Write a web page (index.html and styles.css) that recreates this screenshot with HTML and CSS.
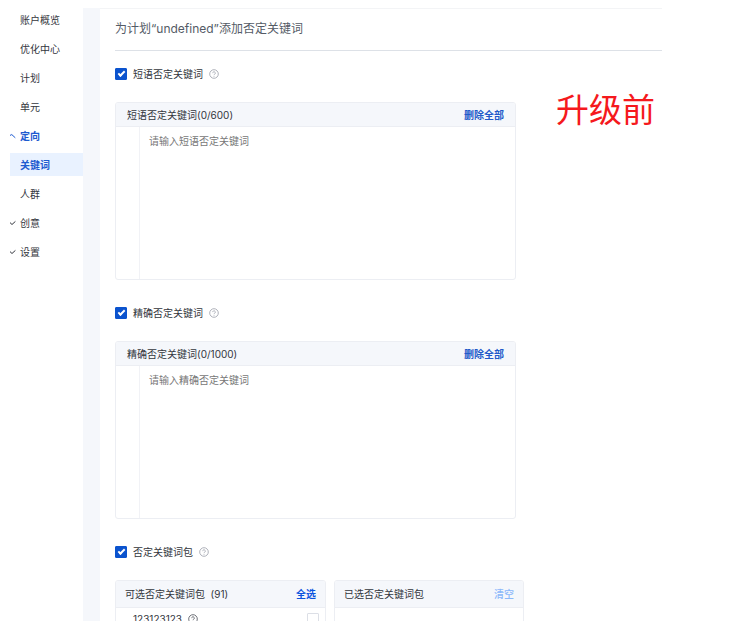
FILE: index.html
```html
<!DOCTYPE html>
<html lang="zh-CN">
<head>
    <meta charset="UTF-8">
    <meta name="viewport" content="width=device-width, initial-scale=1.0">
    <title>添加否定关键词</title>
    <link rel="stylesheet" href="styles.css">
</head>
<body>
    <svg class="symbols" width="0" height="0">
        <symbol id="help" viewBox="0 0 10 10">
            <circle cx="5" cy="5" r="4.3" />
            <path d="M3.7 4.1a1.3 1.3 0 1 1 2 1.1q-.7.4-.7 1M5 7v.7" />
        </symbol>
        <symbol id="up" viewBox="0 0 6 8">
            <path d="M0 3.4 1.8 2.6 5.3 5.8" />
        </symbol>
        <symbol id="down" viewBox="0 0 6 8">
            <path d="M0 3.6 2 5.5 5.4 2.4" />
        </symbol>
    </svg>
    <div class="page">
        <nav class="menu">
            <a class="item" href="#">账户概览</a>
            <a class="item" href="#">优化中心</a>
            <a class="item" href="#">计划</a>
            <a class="item" href="#">单元</a>
            <button class="item group open" type="button"><svg class="arrow"><use href="#up" /></svg>定向</button>
            <a class="item active" href="#">关键词</a>
            <a class="item" href="#">人群</a>
            <button class="item group" type="button"><svg class="arrow"><use href="#down" /></svg>创意</button>
            <button class="item group" type="button"><svg class="arrow"><use href="#down" /></svg>设置</button>
        </nav>
        <main class="main">
            <h1 class="title">为计划“undefined”添加否定关键词</h1>
            <div class="content">
                <form class="form" action="#">
                    <section class="section">
                        <div class="check-row">
                            <input class="check" type="checkbox" id="phrase" checked>
                            <label for="phrase">短语否定关键词</label>
                            <svg class="help"><use href="#help" /></svg>
                        </div>
                        <div class="panel words">
                            <div class="panel-head">
                                <label for="phraseWords">短语否定关键词(0/600)</label>
                                <button class="link" type="button">删除全部</button>
                            </div>
                            <div class="editor">
                                <textarea class="input" id="phraseWords" placeholder="请输入短语否定关键词"></textarea>
                            </div>
                        </div>
                    </section>
                    <section class="section">
                        <div class="check-row">
                            <input class="check" type="checkbox" id="exact" checked>
                            <label for="exact">精确否定关键词</label>
                            <svg class="help"><use href="#help" /></svg>
                        </div>
                        <div class="panel words">
                            <div class="panel-head">
                                <label for="exactWords">精确否定关键词(0/1000)</label>
                                <button class="link" type="button">删除全部</button>
                            </div>
                            <div class="editor">
                                <textarea class="input" id="exactWords" placeholder="请输入精确否定关键词"></textarea>
                            </div>
                        </div>
                    </section>
                    <section class="section">
                        <div class="check-row">
                            <input class="check" type="checkbox" id="pack" checked>
                            <label for="pack">否定关键词包</label>
                            <svg class="help"><use href="#help" /></svg>
                        </div>
                        <div class="packs">
                            <div class="panel">
                                <div class="panel-head pack-head">
                                    <span>可选否定关键词包&nbsp; (91)</span>
                                    <button class="link bright" type="button">全选</button>
                                </div>
                                <div class="pack-row">
                                    <label for="pack1">123123123</label>
                                    <svg class="help dark"><use href="#help" /></svg>
                                    <input class="check end" type="checkbox" id="pack1">
                                </div>
                            </div>
                            <div class="panel">
                                <div class="panel-head pack-head">
                                    <span>已选否定关键词包</span>
                                    <button class="link" type="button" disabled>清空</button>
                                </div>
                            </div>
                        </div>
                    </section>
                </form>
                <p class="note">升级前</p>
            </div>
        </main>
    </div>
</body>
</html>
```

FILE: styles.css
```css
* {
    box-sizing: border-box;
}

body {
    margin: 0;
    background: #fff;
    color: #33363d;
    font-family: Inter, "Noto Sans CJK SC", sans-serif;
    font-size: 10px;
    line-height: 16px;
}

button,
textarea {
    font: inherit;
    border: 0;
    padding: 0;
    background: none;
}

button {
    cursor: pointer;
}

svg {
    fill: none;
    stroke: currentColor;
    flex: none;
}

.symbols {
    position: absolute;
}

.page {
    display: flex;
    height: 100vh;
    padding: 8px 76px 0 10px;
    overflow: hidden;
}

/* 左侧菜单 */
.menu {
    flex: 0 0 90px;
    display: flex;
    flex-direction: column;
    gap: 6px;
    border-right: 17px solid #f5f7fb;
}

.item {
    display: flex;
    align-items: center;
    height: 23px;
    padding: 0 0 0 10px;
    color: #33363d;
    text-decoration: none;
}

.group {
    padding-left: 0;
    gap: 4px;
}

.arrow {
    width: 6px;
    height: 8px;
}

.open,
.active {
    color: #1d5ad0;
    font-weight: 700;
}

.active {
    background: #e9f2ff;
}

/* 右侧内容 */
.main {
    flex: 1;
    min-width: 0;
    padding-left: 15px;
    border-top: 1px solid #f3f4f6;
}

.title {
    margin: 0;
    padding: 10px 0 11px;
    border-bottom: 1px solid #dde1e7;
    color: #545b66;
    font-size: 12px;
    font-weight: 400;
    line-height: 20px;
}

.content {
    display: flex;
    align-items: flex-start;
    gap: 32px;
}

.form {
    flex: 0 1 409px;
    padding-top: 15px;
}

.section {
    margin-bottom: 25px;
}

.check-row {
    display: flex;
    align-items: center;
    gap: 6px;
    margin-bottom: 20px;
}

.check {
    display: grid;
    place-items: center;
    width: 12px;
    height: 12px;
    margin: 0;
    border: 1px solid #dcdfe6;
    border-radius: 1px;
    background: #fff;
    appearance: none;
}

.check:checked {
    border-color: #0b53ce;
    background: #0b53ce;
}

.check:checked::after {
    content: "";
    width: 5px;
    height: 2px;
    margin-bottom: 2px;
    border-left: 2px solid #fff;
    border-bottom: 2px solid #fff;
    transform: rotate(-45deg);
}

.help {
    width: 10px;
    height: 10px;
    color: #9a9ea8;
    stroke-width: 0.8;
}

.dark {
    color: #4b4f58;
}

.panel {
    border: 1px solid #eceef3;
    border-radius: 3px;
    overflow: hidden;
}

.words {
    margin-right: 8px;
}

.panel-head {
    display: flex;
    align-items: center;
    justify-content: space-between;
    height: 24px;
    padding: 0 11px;
    border-bottom: 1px solid #eceef3;
    background: #f5f7fb;
}

.link {
    color: #2159c9;
    font-weight: 700;
}

.bright {
    color: #0b53de;
}

.link:disabled {
    color: #8bb8fa;
    font-weight: 500;
}

.editor {
    padding-left: 23px;
}

.input {
    display: block;
    width: 100%;
    height: 152px;
    padding: 6px 9px;
    border-left: 1px solid #f1f2f6;
    outline: none;
    resize: none;
}

.input::placeholder {
    color: #777;
}

.packs {
    display: grid;
    grid-template-columns: 211fr 190fr;
    gap: 8px;
}

.pack-head {
    height: 27px;
    padding: 0 9px;
}

.pack-row {
    display: flex;
    align-items: center;
    gap: 6px;
    padding: 3px 6px 3px 17px;
}

.end {
    margin-left: auto;
}

/* 红色标注 */
.note {
    flex: none;
    margin: 35px 0 0;
    color: #f5191d;
    font-size: 33px;
    font-weight: 400;
    line-height: 48px;
}
```
